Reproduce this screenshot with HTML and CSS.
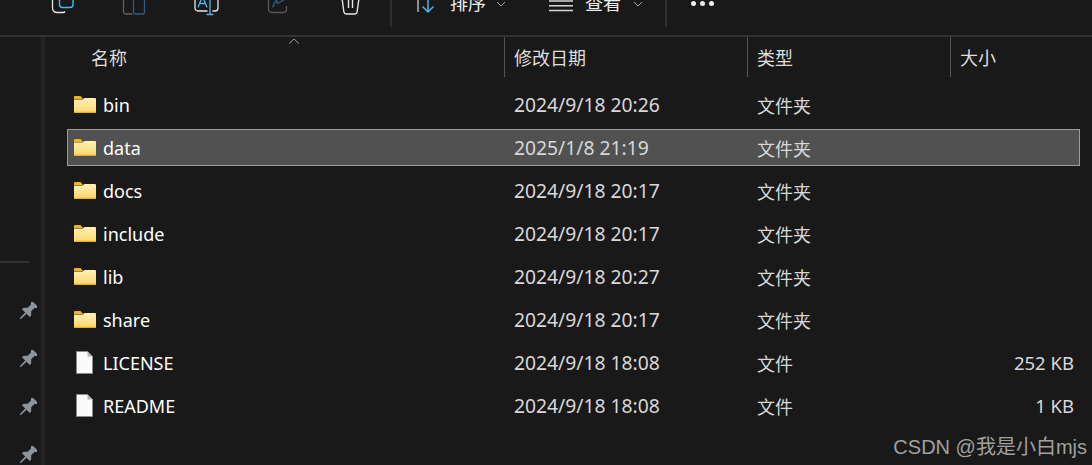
FILE: index.html
```html
<!DOCTYPE html>
<html lang="zh-CN">
    <head>
        <meta charset="UTF-8">
        <title>文件资源管理器</title>
        <link rel="stylesheet" href="styles.css">
    </head>
    <body>
        <header class="toolbar">
            <div class="tool-group">
                <svg class="tool" width="24" height="24" viewBox="0 0 24 24" fill="none"><path d="M2.500 -2v10a4.500 4.500 0 0 0 4.500 4.500h6a2.500 2.500 0 0 0 2-1" stroke="#e8e8e8" stroke-width="1.300"/><rect x="9.500" y="-10" width="13.500" height="17.500" rx="3" stroke="#4cb4ee" stroke-width="1.400"/></svg>
                <svg class="tool" width="24" height="24" viewBox="0 0 24 24" fill="none"><path d="M10.500 14H4a2.500 2.500 0 0 1-2.500-2.500V-2" stroke="#606060" stroke-width="1.300"/><path d="M11.500 -2v14a2 2 0 0 0 2 2h7a2 2 0 0 0 2-2V-2" stroke="#2f5f7c" stroke-width="1.300"/></svg>
                <svg class="tool" width="24" height="24" viewBox="0 0 24 24" fill="none"><path d="M13.500 11H4a3 3 0 0 1-3-3V-4M18.500 11H21a3 3 0 0 0 3-3V-4" stroke="#e8e8e8" stroke-width="1.300"/><path d="M4 7.500L8.500 -4 13 7.500M5.500 3.500h6" stroke="#4cb4ee" stroke-width="1.300"/><path d="M16 -2v16.500M12.500 14.500h7" stroke="#4cb4ee" stroke-width="1.300"/></svg>
                <svg class="tool" width="24" height="24" viewBox="0 0 24 24" fill="none"><path d="M2.500 0v9.500a3 3 0 0 0 3 3h12a3 3 0 0 0 3-3V6" stroke="#5a5a5a" stroke-width="1.300"/><path d="M6.500 7.500C8 4 9 2 10.500 0l1 3.500L17.500 0l5.500-3" stroke="#2b5f80" stroke-width="1.400"/></svg>
                <svg class="tool" width="24" height="24" viewBox="0 0 24 24" fill="none"><path d="M4 -2l1.800 13.500a3 3 0 0 0 3 2.500h7.400a3 3 0 0 0 3-2.500L21 -2M10.500 0v8M14.500 0v8" stroke="#e8e8e8" stroke-width="1.400"/></svg>
            </div>
            <div class="tool-sep"></div>
            <div class="tool-text tool-sort">
                <svg width="24" height="16" viewBox="0 0 24 16" fill="none"><path d="M6 -1v13" stroke="#cfcfcf" stroke-width="1.300"/><path d="M16 -2v13.500M10.500 6.500l5.500 5.500 5.500-5.500" stroke="#4cb4ee" stroke-width="1.500"/></svg>
                <span>排序</span>
                <svg class="chevron" width="10" height="6" viewBox="0 0 10 6" fill="none"><path d="M1 1l4 4 4-4" stroke="#a8a8a8"/></svg>
            </div>
            <div class="tool-text tool-view">
                <svg width="24" height="12" viewBox="0 0 24 12" fill="none"><path d="M0 1h24M0 5.800h24M0 10.500h24" stroke="#d6d6d6" stroke-width="1.400"/></svg>
                <span>查看</span>
                <svg class="chevron" width="10" height="6" viewBox="0 0 10 6" fill="none"><path d="M1 1l4 4 4-4" stroke="#a8a8a8"/></svg>
            </div>
            <div class="tool-sep"></div>
            <div class="tool-more"><i></i><i></i><i></i></div>
        </header>
        <div class="explorer">
            <aside class="nav-pane">
                <div class="nav-rule"></div>
                <ul class="pins">
                    <li><svg width="18" height="18" viewBox="0 0 18 18"><use href="#pin"/></svg></li>
                    <li><svg width="18" height="18" viewBox="0 0 18 18"><use href="#pin"/></svg></li>
                    <li><svg width="18" height="18" viewBox="0 0 18 18"><use href="#pin"/></svg></li>
                    <li><svg width="18" height="18" viewBox="0 0 18 18"><use href="#pin"/></svg></li>
                </ul>
            </aside>
            <main class="files">
                <div class="file-head">
                    <div class="col-name">名称<svg class="sort-arrow" width="12" height="6" viewBox="0 0 12 6" fill="none"><path d="M1 5.500l5-4.500 5 4.500" stroke="#a0a0a0"/></svg></div>
                    <div class="col-date">修改日期</div>
                    <div class="col-type">类型</div>
                    <div class="col-size">大小</div>
                </div>
                <div class="file-row">
                    <div class="col-name"><svg width="22" height="17" viewBox="0 0 22 17"><use href="#folder"/></svg>bin</div>
                    <div class="col-date">2024/9/18 20:26</div>
                    <div class="col-type">文件夹</div>
                    <div class="col-size"></div>
                </div>
                <div class="file-row selected">
                    <div class="col-name"><svg width="22" height="17" viewBox="0 0 22 17"><use href="#folder"/></svg>data</div>
                    <div class="col-date">2025/1/8 21:19</div>
                    <div class="col-type">文件夹</div>
                    <div class="col-size"></div>
                </div>
                <div class="file-row">
                    <div class="col-name"><svg width="22" height="17" viewBox="0 0 22 17"><use href="#folder"/></svg>docs</div>
                    <div class="col-date">2024/9/18 20:17</div>
                    <div class="col-type">文件夹</div>
                    <div class="col-size"></div>
                </div>
                <div class="file-row">
                    <div class="col-name"><svg width="22" height="17" viewBox="0 0 22 17"><use href="#folder"/></svg>include</div>
                    <div class="col-date">2024/9/18 20:17</div>
                    <div class="col-type">文件夹</div>
                    <div class="col-size"></div>
                </div>
                <div class="file-row">
                    <div class="col-name"><svg width="22" height="17" viewBox="0 0 22 17"><use href="#folder"/></svg>lib</div>
                    <div class="col-date">2024/9/18 20:27</div>
                    <div class="col-type">文件夹</div>
                    <div class="col-size"></div>
                </div>
                <div class="file-row">
                    <div class="col-name"><svg width="22" height="17" viewBox="0 0 22 17"><use href="#folder"/></svg>share</div>
                    <div class="col-date">2024/9/18 20:17</div>
                    <div class="col-type">文件夹</div>
                    <div class="col-size"></div>
                </div>
                <div class="file-row">
                    <div class="col-name"><svg width="22" height="23" viewBox="0 0 22 23"><use href="#file"/></svg>LICENSE</div>
                    <div class="col-date">2024/9/18 18:08</div>
                    <div class="col-type">文件</div>
                    <div class="col-size">252 KB</div>
                </div>
                <div class="file-row">
                    <div class="col-name"><svg width="22" height="23" viewBox="0 0 22 23"><use href="#file"/></svg>README</div>
                    <div class="col-date">2024/9/18 18:08</div>
                    <div class="col-type">文件</div>
                    <div class="col-size">1 KB</div>
                </div>
            </main>
        </div>
        <div class="watermark">CSDN @我是小白mjs</div>
        <svg class="defs" width="0" height="0">
            <defs>
                <linearGradient id="folder-fill" x1="0" y1="0" x2="0" y2="1">
                    <stop offset="0" stop-color="#fff1b8"/>
                    <stop offset="1" stop-color="#fdd56a"/>
                </linearGradient>
                <symbol id="folder" viewBox="0 0 22 17">
                    <path d="M0 1a1 1 0 0 1 1-1h5.500l2.500 3H0z" fill="#f7b216"/>
                    <path d="M0 3.500h8.500L10.500 2H21a1 1 0 0 1 1 1v13a1 1 0 0 1-1 1H1a1 1 0 0 1-1-1z" fill="url(#folder-fill)"/>
                    <path d="M0 15.800h22V16a1 1 0 0 1-1 1H1a1 1 0 0 1-1-1z" fill="#f0ae1e"/>
                </symbol>
                <symbol id="file" viewBox="0 0 22 23">
                    <path d="M2.500.500h11l5 5v17h-16z" fill="#fafafa" stroke="#8a8a8a"/>
                    <path d="M13.500.500v5h5z" fill="#b4b4b4"/>
                </symbol>
                <symbol id="pin" viewBox="0 0 18 18">
                    <g transform="rotate(45 9 9)" fill="#8d949b">
                        <path d="M5 -1h8v2l-1.500 1v5l3 3v2h-11v-2l3-3v-5L5 1z"/>
                        <path d="M8 12h2l-.4 8h-1.200z"/>
                    </g>
                </symbol>
            </defs>
        </svg>
    </body>
</html>
```

FILE: styles.css
```css
html, body{
    height: 100%;
}
body{
    margin: 0;
    overflow: hidden;
    position: relative;
    background-color: #191919;
    color: #FFF;
    font-family: "Noto Sans", "Noto Sans CJK SC", sans-serif;
    font-size: 18px;
}
.defs{
    position: absolute;
    top: 0;
    left: 0;
}
.toolbar{
    display: flex;
    align-items: flex-start;
    height: 35px;
    padding-left: 50px;
    border-bottom: 2px solid #333;
}
.tool-group{
    display: flex;
    gap: 48px;
    width: 340px;
}
.tool{
    flex: none;
    overflow: visible;
}
.tool-sep{
    width: 2px;
    height: 27px;
    background-color: #2d2d2d;
}
.tool-text{
    display: flex;
    align-items: flex-start;
    color: #EEE;
}
.tool-text svg{
    flex: none;
}
.tool-text span{
    margin-top: -10px;
    line-height: 24px;
    font-family: "Noto Sans CJK SC", sans-serif;
}
.tool-sort{
    margin-left: 20px;
    gap: 12px;
    width: 137px;
}
.tool-sort span{
    margin-left: 2px;
    margin-right: -2px;
}
.tool-view{
    gap: 12px;
    width: 116px;
}
.chevron{
    margin-top: 1px;
}
.tool-more{
    display: flex;
    gap: 4px;
    margin: 1px 0 0 24px;
}
.tool-more i{
    display: block;
    width: 5px;
    height: 5px;
    border-radius: 50%;
    background-color: #EEE;
}
.explorer{
    display: flex;
    height: 428px;
}
.nav-pane{
    width: 41px;
    border-right: 4px solid #232323;
    flex: none;
}
.nav-rule{
    width: 29px;
    height: 2px;
    margin-top: 224px;
    background-color: #333;
}
.pins{
    display: flex;
    flex-direction: column;
    gap: 30px;
    list-style: none;
    margin: 38px 0 0;
    padding: 0 0 0 19px;
}
.pins li{
    height: 18px;
}
.files{
    flex: 1;
    padding-left: 22px;
    padding-right: 12px;
}
.file-head, .file-row{
    display: grid;
    grid-template-columns: 437px 243px 203px 1fr;
    align-items: center;
}
.file-head{
    height: 40px;
    margin-bottom: 9px;
    color: #DEDEDE;
    font-family: "Noto Sans CJK SC", sans-serif;
}
.file-head .col-name{
    position: relative;
    padding-left: 24px;
}
.file-head .col-date, .file-head .col-type, .file-head .col-size{
    display: flex;
    align-items: center;
    height: 40px;
    padding-left: 9px;
    border-left: 1px solid #555;
}
.sort-arrow{
    position: absolute;
    left: 221px;
    top: -6px;
}
.file-row{
    height: 37px;
    margin-bottom: 6px;
    border: 1px solid transparent;
    box-sizing: border-box;
    color: #FFF;
}
.file-row .col-name{
    display: flex;
    align-items: center;
    gap: 7px;
    padding-left: 6px;
}
.file-row .col-date, .file-row .col-type{
    padding-left: 9px;
    color: #D8D8D8;
}
.file-row .col-date{
    font-size: 19.300px;
}
.file-row .col-type{
    font-family: "Noto Sans CJK SC", sans-serif;
}
.file-row .col-size{
    text-align: right;
    padding-right: 5px;
    font-size: 18.500px;
    color: #D8D8D8;
}
.selected{
    background-color: #515151;
    border-color: #9C9C9C;
}
.watermark{
    position: absolute;
    right: 5px;
    bottom: 6px;
    font-family: "Liberation Sans", "Noto Sans CJK SC", sans-serif;
    font-size: 20px;
    line-height: 24px;
    color: #A0A0A0;
}
```
